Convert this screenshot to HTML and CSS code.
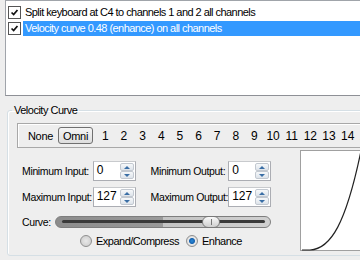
FILE: index.html
```html
<!DOCTYPE html>
<html>
  <head>
    <title>Velocity Curve</title>
    <meta name="viewport" content="width=device-width, initial-scale=1.0" />
    <link rel="stylesheet" href="styles.css">
  </head>
  <body>
    <div class="list">
      <div class="list-item">
        <span class="check">
          <svg viewBox="0 0 13 13" width="13" height="13"><path d="M3 6.5 L5.5 9 L10 3.5" fill="none" stroke="#111" stroke-width="2"/></svg>
        </span>
        <span class="item-text">Split keyboard at C4 to channels 1 and 2 all channels</span>
      </div>
      <div class="list-item selected">
        <span class="check">
          <svg viewBox="0 0 13 13" width="13" height="13"><path d="M3 6.5 L5.5 9 L10 3.5" fill="none" stroke="#111" stroke-width="2"/></svg>
        </span>
        <span class="item-text">Velocity curve 0.48 (enhance) on all channels</span>
      </div>
    </div>

    <fieldset class="group">
      <legend>Velocity Curve</legend>
      <div class="channels">
        <span class="chan wide">None</span>
        <span class="chan wide active">Omni</span>
        <span class="chan">1</span>
        <span class="chan">2</span>
        <span class="chan">3</span>
        <span class="chan">4</span>
        <span class="chan">5</span>
        <span class="chan">6</span>
        <span class="chan">7</span>
        <span class="chan">8</span>
        <span class="chan">9</span>
        <span class="chan">10</span>
        <span class="chan">11</span>
        <span class="chan">12</span>
        <span class="chan">13</span>
        <span class="chan">14</span>
        <span class="chan">15</span>
        <span class="chan">16</span>
      </div>

      <div class="curve-body">
        <div class="controls">
          <div class="row">
            <label class="label-in">Minimum Input:</label>
            <div class="spin">
              <span class="spin-value">0</span>
              <span class="spin-buttons"><span class="up"></span><span class="down"></span></span>
            </div>
            <label class="label-out">Minimum Output:</label>
            <div class="spin">
              <span class="spin-value">0</span>
              <span class="spin-buttons"><span class="up"></span><span class="down"></span></span>
            </div>
          </div>
          <div class="row">
            <label class="label-in">Maximum Input:</label>
            <div class="spin">
              <span class="spin-value">127</span>
              <span class="spin-buttons"><span class="up"></span><span class="down"></span></span>
            </div>
            <label class="label-out">Maximum Output:</label>
            <div class="spin">
              <span class="spin-value">127</span>
              <span class="spin-buttons"><span class="up"></span><span class="down"></span></span>
            </div>
          </div>
          <div class="row curve-row">
            <label class="label-curve">Curve:</label>
            <div class="slider">
              <div class="slider-line"></div>
              <div class="thumb"></div>
            </div>
          </div>
          <div class="radios">
            <span class="radio"></span><span class="radio-text">Expand/Compress</span>
            <span class="radio checked"></span><span class="radio-text">Enhance</span>
          </div>
        </div>

        <div class="graph">
          <svg viewBox="0 0 100 100" width="100" height="100">
            <path d="M1 99 L9 99 C 30 98, 45 72, 60 0" fill="none" stroke="#222" stroke-width="1.2"/>
          </svg>
        </div>
      </div>
    </fieldset>
  </body>
</html>
```

FILE: styles.css
```css
body {
  margin: 0;
  background-color: #eeeeee;
  font-family: "Liberation Sans", Arial, sans-serif;
  font-size: 10.5px;
  letter-spacing: -0.35px;
  color: #000;
  width: 360px;
  height: 260px;
  overflow: hidden;
}

/* top list */
.list {
  margin-left: 5px;
  width: 420px;
  height: 91px;
  padding-top: 3px;
  background-color: #fff;
  border: 1px solid #a0a4aa;
  border-bottom: 1px solid #8e9096;
}

.list-item {
  display: flex;
  align-items: center;
  height: 16px;
  padding-left: 2px;
}

.check {
  width: 11px;
  height: 11px;
  border: 1px solid #555;
  background-color: #fff;
  display: flex;
  margin-right: 2px;
}

.check svg {
  width: 11px;
  height: 11px;
}

.item-text {
  flex: 1;
  height: 15px;
  line-height: 15px;
  padding-left: 2px;
  font-size: 11px;
  letter-spacing: -0.55px;
}

.list-item.selected .item-text {
  background-color: #3399ff;
  color: #fff;
}

/* group box */
.group {
  margin: 8px 0 0 7px;
  padding: 6px 0 4px 9px;
  width: 420px;
  border: 1px solid #d5dfe5;
  border-radius: 3px;
  box-shadow: inset 1px 1px 0 #fff;
}

.group legend {
  margin-left: -5px;
  padding: 0 2px;
  line-height: 13px;
  font-size: 11px;
  letter-spacing: -0.5px;
}

.channels {
  display: flex;
  align-items: center;
  height: 23px;
  padding-left: 5px;
  border: 1px solid #a8a8a8;
  border-right: none;
  box-shadow: inset 1px 1px 0 #fff;
}

.chan {
  width: 18.65px;
  flex-shrink: 0;
  text-align: center;
  line-height: 16px;
  font-size: 12px;
  letter-spacing: 0;
}

.chan.wide {
  width: 35px;
  font-size: 11px;
  letter-spacing: -0.3px;
}

.chan.active {
  box-sizing: border-box;
  height: 17px;
  margin-right: 3px;
  border: 1px solid #707070;
  border-radius: 3px;
  background: linear-gradient(#f4f4f4, #dedede);
}

.curve-body {
  display: flex;
  margin-top: 2px;
}

.controls {
  width: 249px;
  padding: 11px 0 0 5px;
}

.row {
  display: flex;
  align-items: center;
  height: 20px;
  margin-bottom: 6px;
}

.row label {
  white-space: nowrap;
}

.label-in {
  width: 71px;
}

.label-out {
  width: 78px;
  margin-left: 15px;
}

.spin {
  box-sizing: border-box;
  width: 43px;
  height: 20px;
  display: flex;
  border: 1px solid #abadb3;
  border-top-color: #c8cacd;
  background-color: #fff;
}

.spin-value {
  flex: 1;
  padding-left: 3px;
  line-height: 16px;
  font-size: 12px;
  letter-spacing: 0;
}

.spin-buttons {
  width: 14px;
  display: flex;
  flex-direction: column;
  margin: 1px 1px 1px 0;
}

.spin-buttons span {
  flex: 1;
  border: 1px solid #c2c8d0;
  border-radius: 2px;
  background: linear-gradient(#f6f8fa, #dde3ea);
  display: flex;
  align-items: center;
  justify-content: center;
}

.spin-buttons .up::after,
.spin-buttons .down::after {
  content: "";
  border-left: 3px solid transparent;
  border-right: 3px solid transparent;
}

.spin-buttons .up::after {
  border-bottom: 3px solid #3a6ea5;
}

.spin-buttons .down::after {
  border-top: 3px solid #3a6ea5;
}

.curve-row {
  height: 18px;
  margin-top: 5px;
  margin-bottom: 2px;
}

.label-curve {
  width: 33px;
}

.slider {
  position: relative;
  box-sizing: border-box;
  width: 216px;
  height: 12px;
  border: 1px solid #7e7e7e;
  border-radius: 6px;
  background: linear-gradient(to right, #8c8c8c 0, #9a9a9a 50%, #c4c4c4 50%, #d0d0d0 100%);
}

.slider-line {
  height: 3px;
  margin: 3px 5px 0 6px;
  background-color: #3a3a3a;
  border-radius: 2px;
}

.thumb {
  position: absolute;
  left: 146px;
  top: -1px;
  box-sizing: border-box;
  width: 18px;
  height: 12px;
  border: 1px solid #7a7a7a;
  border-radius: 6px;
  background: linear-gradient(#fafafa, #cfcfcf);
}

.thumb::after {
  content: "";
  position: absolute;
  left: 8px;
  top: 2px;
  width: 1px;
  height: 6px;
  background-color: #777;
}

.radios {
  display: flex;
  align-items: center;
  height: 16px;
  padding-left: 58px;
  font-size: 11px;
  letter-spacing: -0.5px;
}

.radio {
  box-sizing: border-box;
  width: 12px;
  height: 12px;
  border: 1px solid #8f8f8f;
  border-radius: 50%;
  background: radial-gradient(#e8e8e8, #c9c9c9);
  margin-right: 4px;
}

.radio.checked {
  background: radial-gradient(#2a8bd8 0, #1662b0 2.5px, #e8e8e8 3.5px, #cfcfcf);
  margin-left: 7px;
}

.graph {
  box-sizing: border-box;
  width: 102px;
  height: 101px;
  margin-left: 29px;
  border: 1px solid #a0a0a0;
  background-color: #fff;
}

.graph svg {
  display: block;
}
```
